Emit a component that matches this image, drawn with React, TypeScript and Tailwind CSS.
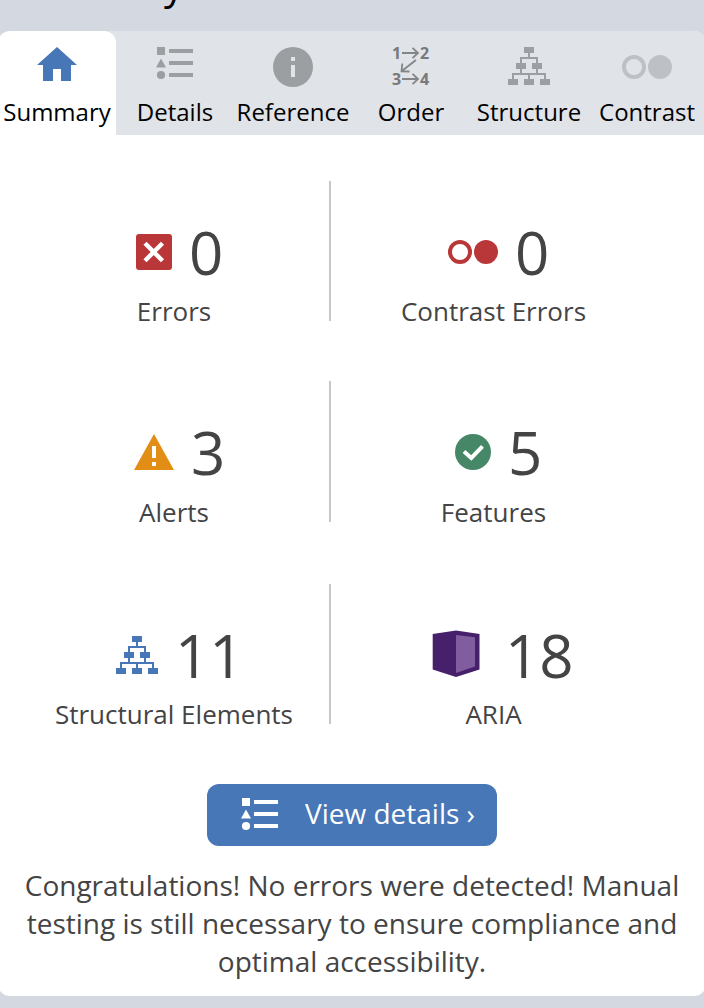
import type { ReactNode } from "react";

function ListIcon({ className }: { className: string }) {
  return (
    <svg width="38" height="34" viewBox="0 0 38 34" fill="currentColor" className={className}>
      <rect x="1" y="0" width="8" height="8" />
      <path d="M5 11.5 10 20.5H0Z" />
      <circle cx="5" cy="28" r="4.1" />
      <path d="M13 2h24v4H13zM13 14h24v4H13zM13 26h24v4H13z" />
    </svg>
  );
}

function TreeIcon({ className }: { className: string }) {
  return (
    <svg width="42" height="38" viewBox="0 0 42 38" fill="currentColor" className={className}>
      <path d="M16 0h10v6H16zM8 16h10v6H8zM24 16h10v6H24zM0 32h10v6H0zM16 32h10v6H16zM32 32h10v6H32z" />
      <path d="M20 6h2v4h8v6h-2v-4H14v4h-2v-6h8zM12 22h2v4h14v-4h2v4h8v6h-2v-4H22v4h-2v-4H6v4H4v-6h8z" />
    </svg>
  );
}

function ContrastIcon({ className }: { className: string }) {
  return (
    <svg width="50" height="24" viewBox="0 0 50 24" className={className}>
      <circle cx="12" cy="12" r="10" fill="none" stroke="currentColor" strokeWidth="4" />
      <circle cx="38" cy="12" r="12" fill="currentColor" />
    </svg>
  );
}

function HomeIcon() {
  return (
    <svg width="40" height="34" viewBox="0 0 40 34" className="text-[#4777b7]">
      <path fill="currentColor" d="M20 0 40 18H34V34H24V22H16V34H6V18H0Z" />
    </svg>
  );
}

function InfoIcon() {
  return (
    <svg width="40" height="40" viewBox="0 0 40 40">
      <circle cx="20" cy="20" r="20" fill="#9c9fa1" />
      <path fill="#e0e3e8" d="M18 10h4v4h-4zM18 18h4v12h-4z" />
    </svg>
  );
}

function OrderIcon() {
  return (
    <svg width="40" height="42" viewBox="0 0 40 42" className="overflow-visible font-['Open_Sans',sans-serif] text-base font-bold">
      <g fill="#77797b">
        <text x="1" y="12">1</text>
        <text x="29" y="12">2</text>
        <text x="1" y="38">3</text>
        <text x="29" y="38">4</text>
      </g>
      <path
        fill="none"
        stroke="#838587"
        strokeWidth="1.8"
        d="M11 6H27M21.500 0.800 27 6l-5.500 5.200M11 32H27M21.500 26.800 27 32l-5.500 5.200M25 13 10.500 24.300M11.300 16.500 10.500 24.300 18.500 24.500"
      />
    </svg>
  );
}

function ErrorIcon() {
  return (
    <svg width="36" height="36" viewBox="0 0 36 36">
      <rect width="36" height="36" rx="3" fill="#ba3739" />
      <path d="m9 9.300 17.500 17.400M26.500 9.300 9 26.700" stroke="#fff" strokeWidth="4.400" />
    </svg>
  );
}

function AlertIcon() {
  return (
    <svg width="40" height="36" viewBox="0 0 40 36">
      <path d="M20 0 40 36H0Z" fill="#e28d16" />
      <path d="M18 12h4v12h-4zM18 28h4v4h-4z" fill="#fff" />
    </svg>
  );
}

function FeatureIcon() {
  return (
    <svg width="36" height="36" viewBox="0 0 36 36">
      <circle cx="18" cy="18" r="18" fill="#458766" />
      <path d="m9 17.500 7.300 6.500L27.500 12.300" fill="none" stroke="#fff" strokeWidth="4" />
    </svg>
  );
}

function AriaIcon() {
  return (
    <svg width="56" height="50" viewBox="0 0 56 50">
      <path d="M.7 4 24 .500 47.500 4V39.500L24 47 .7 39.500Z" fill="#47206b" />
      <path d="M24 5 43 7.200V36.500L24 43Z" fill="#805d9e" />
    </svg>
  );
}

const tabs: { label: string; icon: ReactNode; active?: boolean }[] = [
  { label: "Summary", icon: <HomeIcon />, active: true },
  { label: "Details", icon: <ListIcon className="text-[#9c9fa1]" /> },
  { label: "Reference", icon: <InfoIcon /> },
  { label: "Order", icon: <OrderIcon /> },
  { label: "Structure", icon: <TreeIcon className="text-[#9c9fa1]" /> },
  { label: "Contrast", icon: <ContrastIcon className="mt-2 text-[#bdc0c4]" /> },
];

function Stat({ icon, count, label, className }: { icon: ReactNode; count: number; label: string; className: string }) {
  return (
    <div className="flex h-full flex-col justify-between">
      <div className={`flex h-[60px] items-center gap-[17px] text-[60px] leading-[60px] ${className}`}>
        {icon}
        <span>{count}</span>
      </div>
      <div className="-mb-2 text-center text-[26px] leading-9 whitespace-nowrap">{label}</div>
    </div>
  );
}

function StatRow({ className, left, right }: { className: string; left: ReactNode; right: ReactNode }) {
  return (
    <div className={`flex ${className}`}>
      <div className="w-[312px] border-r-2 border-[#c8c8c8] pt-[41px]">{left}</div>
      <div className="w-[325px] pt-[41px]">{right}</div>
    </div>
  );
}

export default function App() {
  return (
    <div className="h-[1008px] w-[704px] overflow-hidden bg-[#d4d8e0] font-['Open_Sans',sans-serif] text-[#444]">
      <header className="flex h-[31px] items-end overflow-hidden pl-[164px] text-[40px] leading-[54px] text-black">
        <span className="mb-[20px]">y</span>
      </header>
      <main className="-ml-0.5 h-[965px] w-[708px] overflow-hidden rounded-xl bg-white">
        <nav className="flex h-[104px] bg-[#e0e3e8] text-black">
          {tabs.map((tab) => (
            <button
              key={tab.label}
              className={`flex w-[118px] shrink-0 flex-col items-center pt-4 ${tab.active ? "rounded-t-xl bg-white" : ""}`}
            >
              <span className="flex h-[46px] items-start">{tab.icon}</span>
              <span className="text-2xl leading-[38px] whitespace-nowrap">{tab.label}</span>
            </button>
          ))}
        </nav>
        <section className="pt-[46px] pl-[21px]">
          <StatRow
            className="h-[140px]"
            left={<Stat icon={<ErrorIcon />} count={0} label="Errors" className="pl-[117px]" />}
            right={<Stat icon={<ContrastIcon className="text-[#ba3739]" />} count={0} label="Contrast Errors" className="pl-[117px]" />}
          />
          <StatRow
            className="mt-[60px] h-[141px]"
            left={<Stat icon={<AlertIcon />} count={3} label="Alerts" className="pl-[115px]" />}
            right={<Stat icon={<FeatureIcon />} count={5} label="Features" className="pl-[124px]" />}
          />
          <StatRow
            className="mt-[62px] h-[140px]"
            left={<Stat icon={<TreeIcon className="text-[#4777b7]" />} count={11} label="Structural Elements" className="pl-[97px]" />}
            right={<Stat icon={<AriaIcon />} count={18} label="ARIA" className="pl-[101px]" />}
          />
        </section>
        <button className="mt-[60px] ml-[209px] flex h-[62px] w-[290px] items-center rounded-xl bg-[#4777b7] pl-[34px] text-[28px] leading-[58px] text-white">
          <ListIcon className="" />
          <span className="mb-1 ml-[26px] whitespace-nowrap">View details ›</span>
        </button>
        <p className="mt-[20px] px-5 text-center text-[28px] leading-[38px]">
          Congratulations! No errors were detected! Manual
          <br />
          testing is still necessary to ensure compliance and
          <br />
          optimal accessibility.
        </p>
      </main>
    </div>
  );
}
